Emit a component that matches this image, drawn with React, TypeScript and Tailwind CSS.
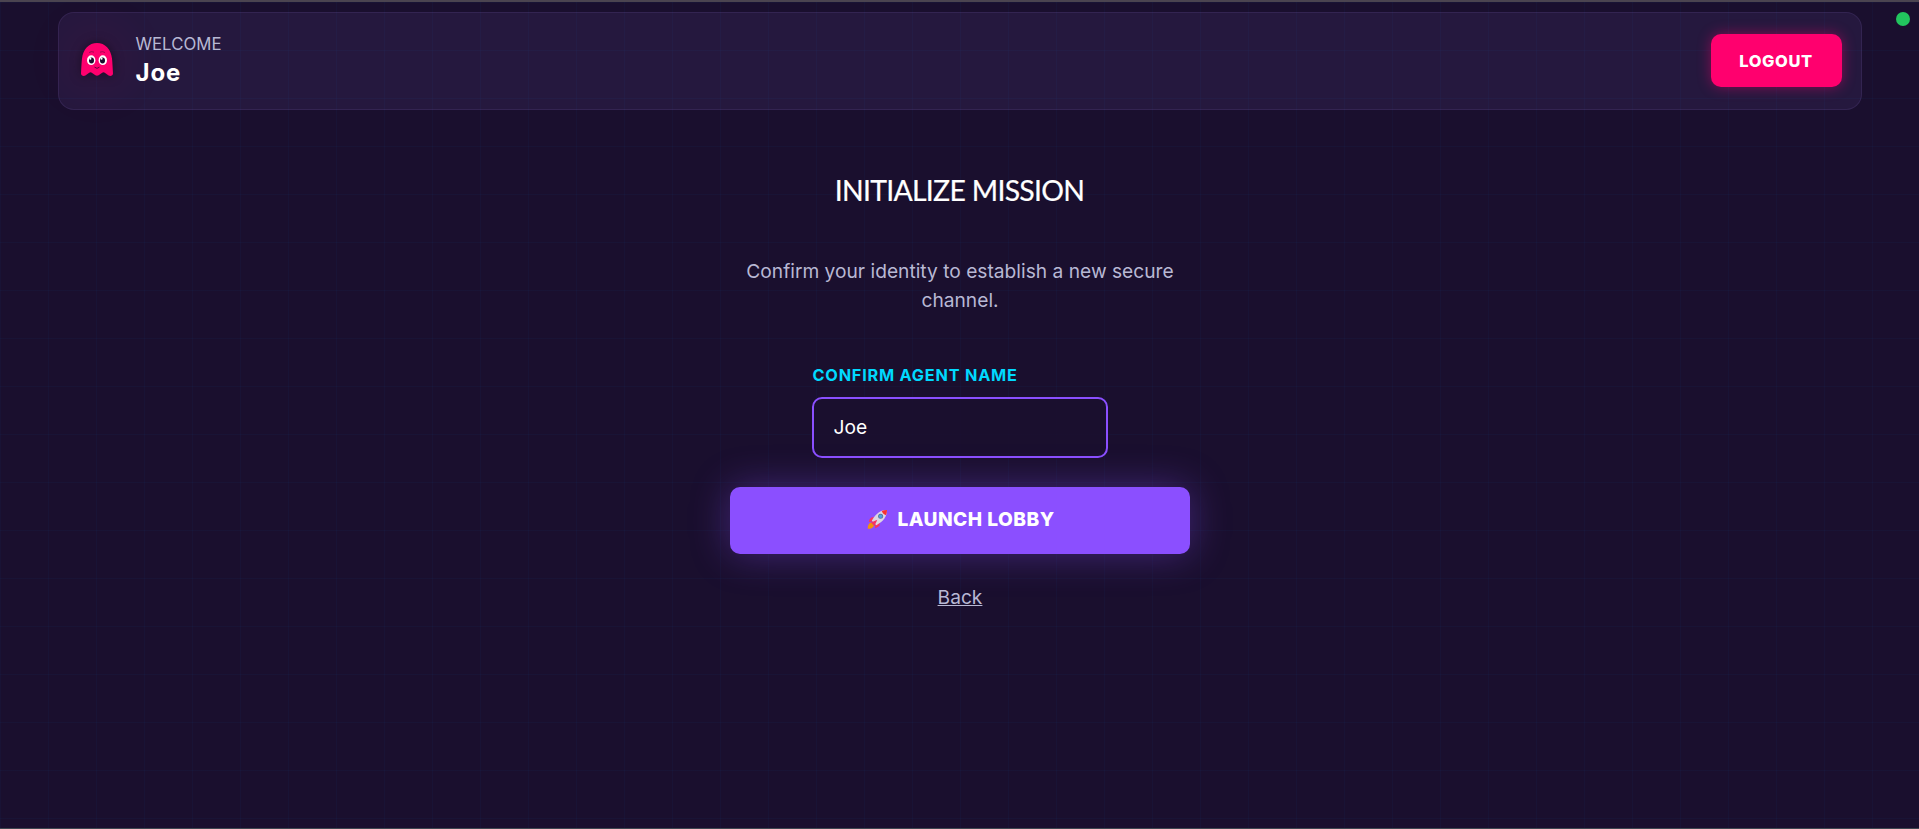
import { useState } from "react"

function Ghost() {
  return (
    <svg
      width="48"
      height="48"
      viewBox="0 0 48 48"
      className="drop-shadow-[0_0_6px_rgba(0,0,0,0.45)]"
    >
      <path
        d="M8 38.5 C8.3 33 8.5 28 9 23.5 C10 14.2 16 8 24 8 C32 8 38 14.2 39 23.5 C39.5 28 39.7 33 40 38.5 C40 40.6 37.6 41.6 35.6 40.6 L31.8 37.8 C31 37.1 30 37.1 29.2 37.8 L25.6 40.3 C24.6 40.9 23.4 40.9 22.4 40.3 L18.8 37.8 C18 37.1 17 37.1 16.2 37.8 L12.4 40.6 C10.4 41.6 8 40.6 8 38.5Z"
        fill="#ff006e"
      />
      <path
        d="M16 17.6 Q18.5 15.8 21 17.2 M27 17.2 Q29.5 15.8 32 17.6"
        fill="none"
        stroke="#8c0b4c"
        strokeWidth="0.8"
      />
      <ellipse cx="18.2" cy="25.2" rx="4.2" ry="4.9" fill="#fff" />
      <ellipse cx="29.8" cy="25.2" rx="4.2" ry="4.9" fill="#fff" />
      <ellipse cx="18.5" cy="25.4" rx="2.5" ry="3" fill="#1a0f2e" />
      <ellipse cx="29.5" cy="25.4" rx="2.5" ry="3" fill="#1a0f2e" />
      <circle cx="17.4" cy="23.8" r="1" fill="#fff" />
      <circle cx="28.6" cy="23.8" r="1" fill="#fff" />
      <path
        d="M21.8 32.4 Q24 34.6 26.2 32.4"
        fill="none"
        stroke="#5c0a3a"
        strokeWidth="1"
        strokeLinecap="round"
      />
    </svg>
  )
}

function Rocket() {
  return (
    <svg width="21" height="21" viewBox="0 0 21 21">
      <path d="M4.3 13.5 C1.5 14 .8 16.8 .7 19.8 C3.5 20 6.5 19.2 7 16.5Z" fill="#f4900c" />
      <path d="M8.5 7.8 L4.4 8.6 C2.8 9.7 2 11.6 1.8 13 L6 12.5Z" fill="#f8355f" />
      <path d="M13 12.5 L12.5 16.6 C11.3 18.2 9.5 19 8 19.2 L8.5 15Z" fill="#f8355f" />
      <path d="M20 1 C14 1 9 4 4.8 11.7 L9.3 16.2 C17 12 20 7 20 1Z" fill="#dcd5e3" />
      <path d="M20 1 C18 1 16.3 1.3 14.7 2 C15.6 4.2 16.8 5.4 19 6.3 C19.7 4.7 20 3 20 1Z" fill="#f8312f" />
      <path d="M10.3 10.7 L4 13.5 L7.5 17Z" fill="#f8355f" />
      <circle cx="13.6" cy="7.3" r="2.5" fill="#5c6f98" />
      <circle cx="13.6" cy="7.3" r="1.7" fill="#4a9fe8" />
    </svg>
  )
}

function Header({ name }: { name: string }) {
  return (
    <header className="flex h-[98px] w-[1804px] items-center justify-between rounded-2xl border border-[#b496ff]/10 bg-[#9678e6]/9 pr-[19px] pb-[2px] pl-[14px]">
      <div className="flex items-center">
        <div className="mb-[2px] rounded-full bg-[#ff006e]/3 shadow-[0_0_50px_10px_rgba(255,0,110,0.06)]">
          <Ghost />
        </div>
        <div className="ml-[15px] flex flex-col">
          <span className="text-[16.8px] leading-[25px] text-[#b8b8d4]">
            WELCOME
          </span>
          <span className="text-[24px] leading-[31px] font-bold tracking-[0.9px] text-white">
            {name}
          </span>
        </div>
      </div>
      <button className="h-[53px] w-[131px] rounded-[10px] bg-[#ff006e] pt-[2px] text-[16.5px] font-extrabold tracking-[0.6px] text-white shadow-[0_0_14px_rgba(255,0,110,0.45)]">
        LOGOUT
      </button>
    </header>
  )
}

export default function App() {
  const [name, setName] = useState("Joe")

  return (
    <div className="relative h-[829px] overflow-hidden border-t-2 border-b border-t-[#4b4450] border-b-[#3f4650] bg-[#1a0f2e] bg-[linear-gradient(rgba(0,150,255,0.035)_1px,transparent_1px),linear-gradient(90deg,rgba(0,150,255,0.035)_1px,transparent_1px)] bg-[size:48px_48px] font-[Inter,sans-serif]">
      <div className="flex flex-col items-center pt-[10px]">
        <Header name="Joe" />

        <main className="flex w-[460px] flex-col items-center">
          <h1 className="mt-[58px] text-[28.4px] leading-[44px] tracking-[-0.7px] whitespace-nowrap text-white font-[Lato,sans-serif] [-webkit-text-stroke:0.2px_white]">
            INITIALIZE MISSION
          </h1>
          <p className="mt-[45px] w-full pl-px text-center text-[19.2px] leading-[28.8px] text-[#b8b8d4]">
            Confirm your identity to establish a new secure channel.
          </p>

          <div className="mt-[48px] flex w-[296px] flex-col">
            <label className="pl-px text-[16.3px] leading-[24px] font-bold tracking-[0.78px] whitespace-nowrap text-[#00d9ff]">
              CONFIRM AGENT NAME
            </label>
            <input
              value={name}
              onChange={(e) => setName(e.target.value)}
              className="mt-[10px] h-[61px] rounded-[10px] border-2 border-[#8b4fff] bg-[#1a0f2e]/80 px-5 text-[19.2px] text-white outline-none"
            />
          </div>

          <button className="mt-[29px] flex h-[67px] w-full items-center justify-center gap-[9px] rounded-[10px] bg-[#8b4fff] pb-[2px] pl-[3px] text-[19.2px] font-extrabold tracking-[0.45px] text-white shadow-[0_0_38px_rgba(139,79,255,0.36)]">
            <Rocket />
            LAUNCH LOBBY
          </button>
          <button className="mt-[29px] pl-px text-[19.2px] leading-[29px] text-[#b8b8d4] underline">
            Back
          </button>
        </main>
      </div>

      {/* connection status */}
      <span className="absolute top-[10px] right-[9px] size-[14px] rounded-full bg-[#22c55e]" />
    </div>
  )
}
